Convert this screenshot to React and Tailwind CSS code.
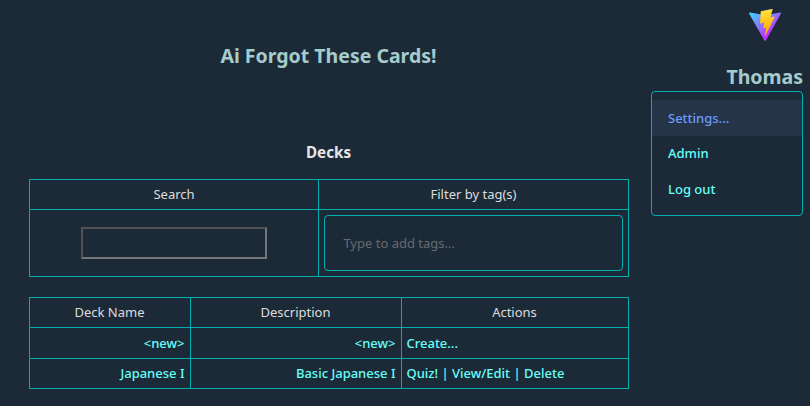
import React from 'react';

const link = 'font-medium text-[#66fff8]';

function Logo() {
  return (
    <svg className="block h-8 w-8" viewBox="0 0 256 257" aria-hidden="true">
      <defs>
        <linearGradient id="shell" x1="-.828%" x2="57.636%" y1="7.652%" y2="78.411%">
          <stop offset="0%" stopColor="#41D1FF" />
          <stop offset="100%" stopColor="#BD34FE" />
        </linearGradient>
        <linearGradient id="bolt" x1="43.376%" x2="50.316%" y1="2.242%" y2="89.03%">
          <stop offset="0%" stopColor="#FFEA83" />
          <stop offset="8.333%" stopColor="#FFDD35" />
          <stop offset="100%" stopColor="#FFA800" />
        </linearGradient>
      </defs>
      <path fill="url(#shell)" d="M255.153 37.938L134.897 252.976c-2.483 4.44-8.862 4.466-11.382.048L.875 37.958c-2.746-4.814 1.371-10.646 6.827-9.67l120.385 21.517a6.537 6.537 0 0 0 2.322-.004l117.867-21.483c5.438-.991 9.574 4.796 6.877 9.62Z" />
      <path fill="url(#bolt)" d="M185.432.063L96.44 17.501a3.268 3.268 0 0 0-2.634 3.014l-5.474 92.456a3.268 3.268 0 0 0 3.997 3.378l24.777-5.718c2.318-.535 4.413 1.507 3.936 3.838l-7.361 36.047c-.495 2.426 1.782 4.5 4.151 3.78l15.304-4.649c2.372-.72 4.652 1.36 4.15 3.788l-11.698 56.621c-.732 3.542 3.979 5.473 5.943 2.437l1.313-2.028l72.516-144.72c1.215-2.423-.88-5.186-3.54-4.672l-25.505 4.922c-2.396.462-4.435-1.77-3.759-4.114l16.646-57.705c.677-2.35-1.37-4.583-3.769-4.113Z" />
    </svg>
  );
}

function Cell({ pad = 'pr-[5.5px] pl-[4.5px]', className = '', children }) {
  return <div className={`flex items-center border-r border-b border-[#00b0ad] ${pad} ${className}`}>{children}</div>;
}

export default function App() {
  return (
    <div className="flex h-[406px] w-[810px] overflow-hidden bg-[#1c2a38] pl-[29px] font-['Noto_Sans',sans-serif] text-[13px] leading-5 text-[#dddddd]">
      <main className="flex w-[600px] flex-col">
        <h1 className="mt-[42px] h-7 pr-px text-center text-[19.5px] leading-7 font-bold text-[#a5cccc]">Ai Forgot These Cards!</h1>
        <h2 className="mt-[72px] h-5 pr-px text-center text-[15.2px] leading-5 font-bold text-[#e6e6e6]">Decks</h2>

        <section className="mt-[17px] grid grid-cols-[289px_310px] grid-rows-[30px_67px] border-t border-l border-[#00b0ad]">
          <Cell pad="px-[5px]" className="justify-center pb-px">Search</Cell>
          <Cell pad="px-[5px]" className="justify-center pb-px">Filter by tag(s)</Cell>
          <Cell pad="px-[5px]" className="justify-center">
            <input className="h-8 w-[186px] border-2 border-t-[#525252] border-r-[#767676] border-b-[#767676] border-l-[#525252] bg-transparent outline-none" />
          </Cell>
          <Cell pad="px-[5px]">
            <div className="flex h-14 w-full items-center rounded border border-[#00b0ad] px-[18.4px] text-[#656a6e]">Type to add tags...</div>
          </Cell>
        </section>

        <section className="mt-5 grid grid-cols-[161px_211px_227px] grid-rows-[30px_31px_30px] border-t border-l border-[#00b0ad]">
          <Cell className="justify-center pb-px">Deck Name</Cell>
          <Cell className="justify-center pb-px">Description</Cell>
          <Cell className="justify-center pb-px">Actions</Cell>
          <Cell className="justify-end"><a className={link}>&lt;new&gt;</a></Cell>
          <Cell className="justify-end"><a className={link}>&lt;new&gt;</a></Cell>
          <Cell><a className={link}>Create...</a></Cell>
          <Cell className="justify-end pb-px"><a className={link}>Japanese I</a></Cell>
          <Cell className="justify-end pb-px"><a className={link}>Basic Japanese I</a></Cell>
          <Cell className="pb-px">
            <span className={`${link} whitespace-pre`}>
              <a>Quiz!</a> | <a>View/Edit</a> | <a>Delete</a>
            </span>
          </Cell>
        </section>
      </main>

      <aside className="ml-[22px] flex w-[152px] flex-col">
        <div className="mt-[9px] mr-[22px] self-end"><Logo /></div>
        <h2 className="mt-[22px] h-7 text-right text-[19.5px] leading-7 font-bold text-[#a5cccc]">Thomas</h2>
        <nav className="flex h-[125px] flex-col rounded border border-[#00b0ad] pt-2">
          <a className="flex h-9 items-center bg-[#253447] px-4 font-medium text-[#6c9cff]">Settings...</a>
          <a className={`flex h-[35px] items-center px-4 pb-px ${link}`}>Admin</a>
          <a className={`flex h-9 items-center px-4 ${link}`}>Log out</a>
        </nav>
      </aside>
    </div>
  );
}
